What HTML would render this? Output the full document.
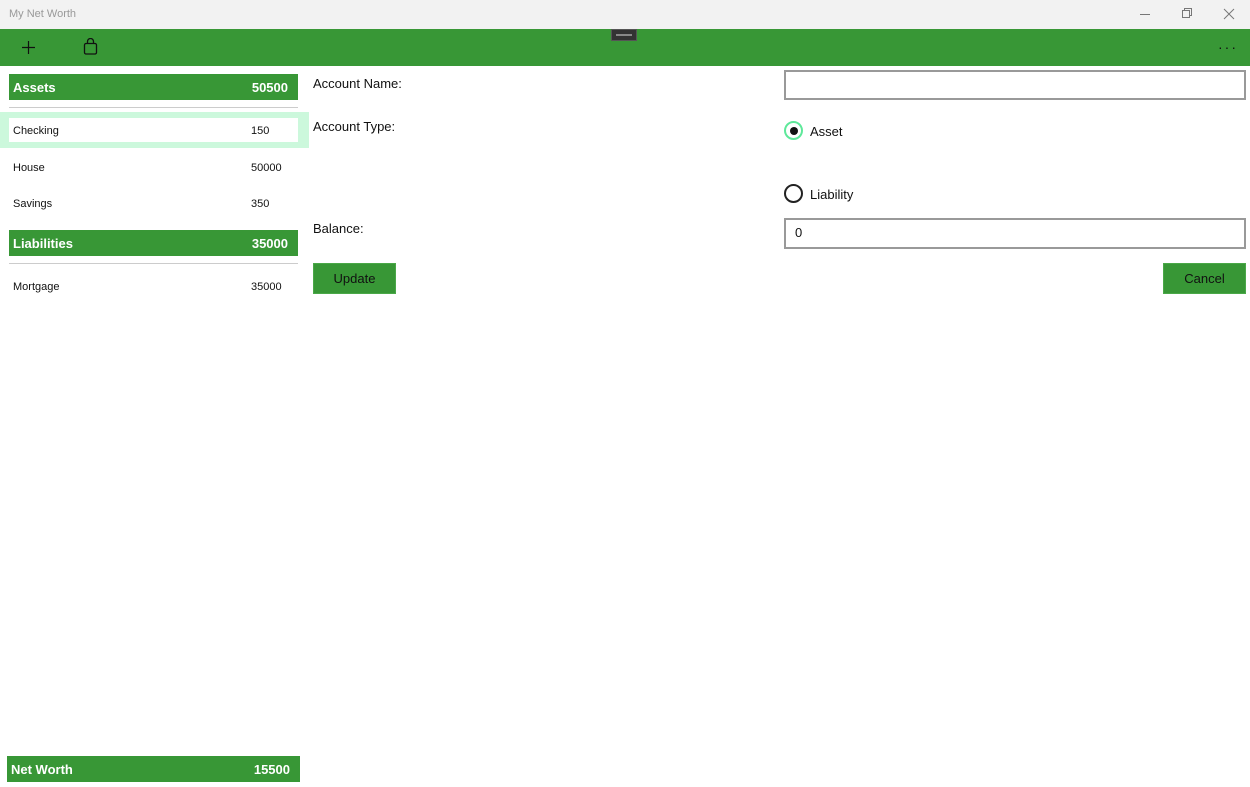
<!DOCTYPE html>
<html><head><meta charset="utf-8"><style>
*{margin:0;padding:0;box-sizing:border-box}
body{width:1250px;height:787px;background:#fff;font-family:"Liberation Sans",sans-serif;position:relative;overflow:hidden;color:#111}
.a{position:absolute}
.g{background:#389736}
.hdr{color:#fff;font-weight:bold;font-size:13px;display:flex;justify-content:space-between;align-items:center;padding:0 10px 0 4px}
.row{font-size:11px;color:#111}
.lbl{font-size:13px;color:#111}
.btn{background:#389736;border:1px solid #4aa848;color:#111;font-size:13px;display:flex;align-items:center;justify-content:center}
.box{border:2px solid #999;background:#fff}
</style></head><body>
<div class="a" style="left:0;top:0;width:1250px;height:29px;background:#f2f2f2"></div>
<div class="a" style="left:9px;top:8px;font-size:11px;color:#999">My Net Worth</div>
<svg class="a" style="left:1130px;top:5px" width="110" height="20">
<line x1="10" y1="9.5" x2="20" y2="9.5" stroke="#777"/>
<rect x="52.5" y="5.5" width="7" height="7" fill="none" stroke="#777"/><path d="M54.5 5.5V3.5H61.5V10.5H59.5" fill="none" stroke="#777"/>
<path d="M94 4L104 14M104 4L94 14" stroke="#777"/>
</svg>
<div class="a g" style="left:0;top:29px;width:1250px;height:37px"></div>
<svg class="a" style="left:20px;top:39px" width="18" height="18"><path d="M8.5 2V15M2 8.5H15" stroke="#111" stroke-width="1.2"/></svg>
<svg class="a" style="left:82px;top:38px" width="18" height="18"><rect x="2.5" y="5.5" width="12" height="10.5" rx="1.5" fill="none" stroke="#111" stroke-width="1.3"/><path d="M5.5 5.5V3.5a3 3 0 0 1 6 0V5.5" fill="none" stroke="#111" stroke-width="1.3"/></svg>
<div class="a" style="left:611px;top:29px;width:26px;height:12px;background:#333;border:1px solid #555"><div style="margin:4px 4px;height:2px;background:#888"></div></div>
<div class="a" style="left:1218px;top:39px;color:#111;font-size:14px;letter-spacing:2px">···</div>

<div class="a g hdr" style="left:9px;top:74px;width:289px;height:26px"><span>Assets</span><span>50500</span></div>
<div class="a" style="left:9px;top:107px;width:289px;height:1px;background:#ccc"></div>
<div class="a" style="left:0;top:112px;width:309px;height:36px;background:#ccf8dc"></div>
<div class="a" style="left:9px;top:118px;width:289px;height:24px;background:#fff"></div>
<div class="a row" style="left:13px;top:125px">Checking</div><div class="a row" style="left:251px;top:125px">150</div>
<div class="a row" style="left:13px;top:162px">House</div><div class="a row" style="left:251px;top:162px">50000</div>
<div class="a row" style="left:13px;top:198px">Savings</div><div class="a row" style="left:251px;top:198px">350</div>
<div class="a g hdr" style="left:9px;top:230px;width:289px;height:26px"><span>Liabilities</span><span>35000</span></div>
<div class="a" style="left:9px;top:263px;width:289px;height:1px;background:#ccc"></div>
<div class="a row" style="left:13px;top:281px">Mortgage</div><div class="a row" style="left:251px;top:281px">35000</div>

<div class="a g hdr" style="left:7px;top:756px;width:293px;height:26px"><span>Net Worth</span><span>15500</span></div>

<div class="a lbl" style="left:313px;top:76px">Account Name:</div>
<div class="a lbl" style="left:313px;top:119px">Account Type:</div>
<div class="a lbl" style="left:313px;top:221px">Balance:</div>
<div class="a box" style="left:784px;top:70px;width:462px;height:30px"></div>
<div class="a" style="left:784px;top:121px;width:19px;height:19px;border-radius:50%;border:2px solid #5ee89a;background:#fff"><div style="margin:3.5px;width:8px;height:8px;border-radius:50%;background:#111"></div></div>
<div class="a lbl" style="left:810px;top:124px">Asset</div>
<div class="a" style="left:784px;top:184px;width:19px;height:19px;border-radius:50%;border:2px solid #222;background:#fff"></div>
<div class="a lbl" style="left:810px;top:187px">Liability</div>
<div class="a box" style="left:784px;top:218px;width:462px;height:31px"><div style="font-size:13px;padding:5px 9px">0</div></div>
<div class="a btn" style="left:313px;top:263px;width:83px;height:31px">Update</div>
<div class="a btn" style="left:1163px;top:263px;width:83px;height:31px">Cancel</div>
</body></html>
